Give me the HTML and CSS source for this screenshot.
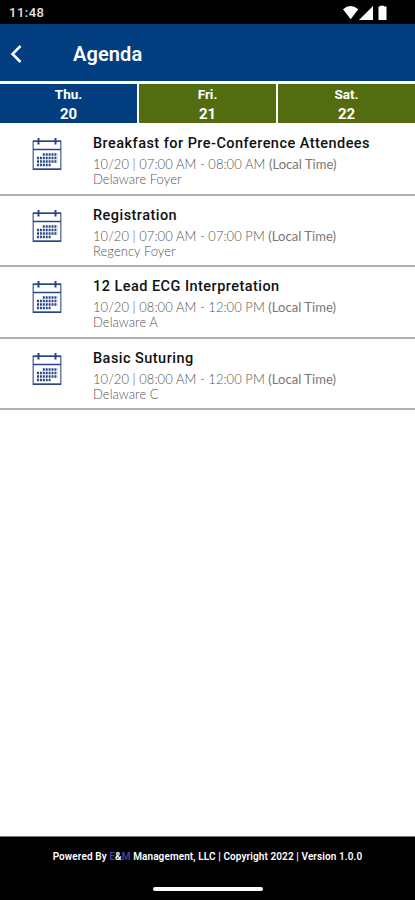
FILE: index.html
```html
<!DOCTYPE html>
<html lang="en">
<head>
<meta charset="utf-8">
<title>Agenda</title>
<link rel="stylesheet" href="styles.css">
</head>
<body>
<svg class="defs" width="0" height="0" aria-hidden="true">
  <symbol id="calendar" viewBox="0 0 30 34">
    <g fill="none" stroke="#284587">
      <rect x="1.2" y="4.2" width="27.6" height="28" stroke-width="1.4" stroke="#5f719f"/>
      <path d="M1 4.3H29M1 12.5H29M1 32.2H29" stroke-width="1.6"/>
      <path d="M6.5 1V7.5M23.5 1V7.5" stroke-width="2"/>
      <path d="M10.8 17.5H25.5M5 21H25.5M5 24.5H25.5M5 28H19.5" stroke-width="2.5" stroke-dasharray="2 0.9"/>
    </g>
  </symbol>
</svg>
<div class="screen">
  <div class="status">
    <span class="clock">11:48</span>
    <svg width="46" height="16" viewBox="0 0 46 16" fill="#fff">
      <path d="M0 4.2Q7.5-2.2 15.3 4.2L7.7 14.3Z"/>
      <path d="M30 1V15H16Z"/>
      <path d="M37 1.5V0.8H41V1.5H43.5V15H35.5V1.5Z"/>
    </svg>
  </div>
  <header class="bar">
    <svg class="back" width="12" height="18" viewBox="0 0 12 18"><path d="M10.5 1L2.5 9L10.5 17" fill="none" stroke="#fff" stroke-width="2.5"/></svg>
    <h1>Agenda</h1>
  </header>
  <nav class="days">
    <div class="day active"><span>Thu.</span><span class="num">20</span></div>
    <div class="day"><span>Fri.</span><span class="num">21</span></div>
    <div class="day"><span>Sat.</span><span class="num">22</span></div>
  </nav>
  <main>
    <article class="row">
      <svg class="icon"><use href="#calendar"/></svg>
      <div><h2>Breakfast for Pre-Conference Attendees</h2>
      <p><span>10/20 | 07:00 AM - 08:00 AM</span> <b>(Local Time)</b></p><p>Delaware Foyer</p></div>
    </article>
    <article class="row">
      <svg class="icon"><use href="#calendar"/></svg>
      <div><h2>Registration</h2>
      <p><span>10/20 | 07:00 AM - 07:00 PM</span> <b>(Local Time)</b></p><p>Regency Foyer</p></div>
    </article>
    <article class="row">
      <svg class="icon"><use href="#calendar"/></svg>
      <div><h2>12 Lead ECG Interpretation</h2>
      <p><span>10/20 | 08:00 AM - 12:00 PM</span> <b>(Local Time)</b></p><p>Delaware A</p></div>
    </article>
    <article class="row">
      <svg class="icon"><use href="#calendar"/></svg>
      <div><h2>Basic Suturing</h2>
      <p><span>10/20 | 08:00 AM - 12:00 PM</span> <b>(Local Time)</b></p><p>Delaware C</p></div>
    </article>
  </main>
  <footer>
    <p>Powered By <i>E</i>&amp;<i>M</i> Management, LLC | Copyright 2022 | Version 1.0.0</p>
    <div class="home"></div>
  </footer>
</div>
</body>
</html>
```
FILE: styles.css
```css
* { box-sizing: border-box; margin: 0; padding: 0; }
body { background: #fff; font-family: Roboto, sans-serif; }
.defs { display: block; }
.screen { width: 415px; height: 900px; display: flex; flex-direction: column; overflow: hidden; }
.status { height: 24px; flex: none; background: #000; color: #e4e4e4; display: flex; justify-content: space-between; padding: 5px 26px 0 9px; }
.clock { font-size: 13px; line-height: 16px; font-weight: 500; letter-spacing: 0.5px; }
.bar { height: 57px; flex: none; background: #033f80; display: flex; align-items: center; color: #fff; padding: 3px 0 0 10px; }
.back { flex: none; margin-right: 51px; }
h1 { font-size: 20px; line-height: 24px; font-weight: 600; letter-spacing: 0.1px; }
.days { height: 42px; flex: none; display: grid; grid-template-columns: 137px 137px 1fr; gap: 2px; padding-top: 3px; background: #fff; }
.day { background: #546c10; color: #fff; display: flex; flex-direction: column; align-items: center; font-size: 13.5px; line-height: 20px; font-weight: 700; height: 39px; }
.num { font-size: 15px; line-height: 20px; }
.active { background: #033f80; }
main { flex: 1; background: #fff; padding-top: 1px; }
.row { height: 71.6px; display: flex; border-bottom: 2px solid #b0b0b0; padding-top: 10px; }
.icon { width: 30px; height: 34px; flex: none; margin: 3px 31px 0 32px; }
h2 { font-size: 14.5px; line-height: 20px; font-weight: 500; letter-spacing: 0.46px; color: #111; white-space: nowrap; }
.row p { font-family: Lato, sans-serif; font-size: 13px; line-height: 15px; font-weight: 300; letter-spacing: 0.04px; color: #555; white-space: nowrap; }
h2 + p { padding-top: 3px; }
.row b { font-weight: 400; color: #777; }
footer { height: 64px; flex: none; background: #000; border-top: 1px solid #777; color: #fff; display: flex; flex-direction: column; align-items: center; }
footer p { font-size: 10px; line-height: 14px; font-weight: 600; letter-spacing: 0.1px; margin-top: 13px; white-space: nowrap; }
footer i { font-style: normal; color: #4b3fa0; }
.home { width: 110px; height: 4px; border-radius: 2px; background: #fff; margin-top: 23px; }
```
